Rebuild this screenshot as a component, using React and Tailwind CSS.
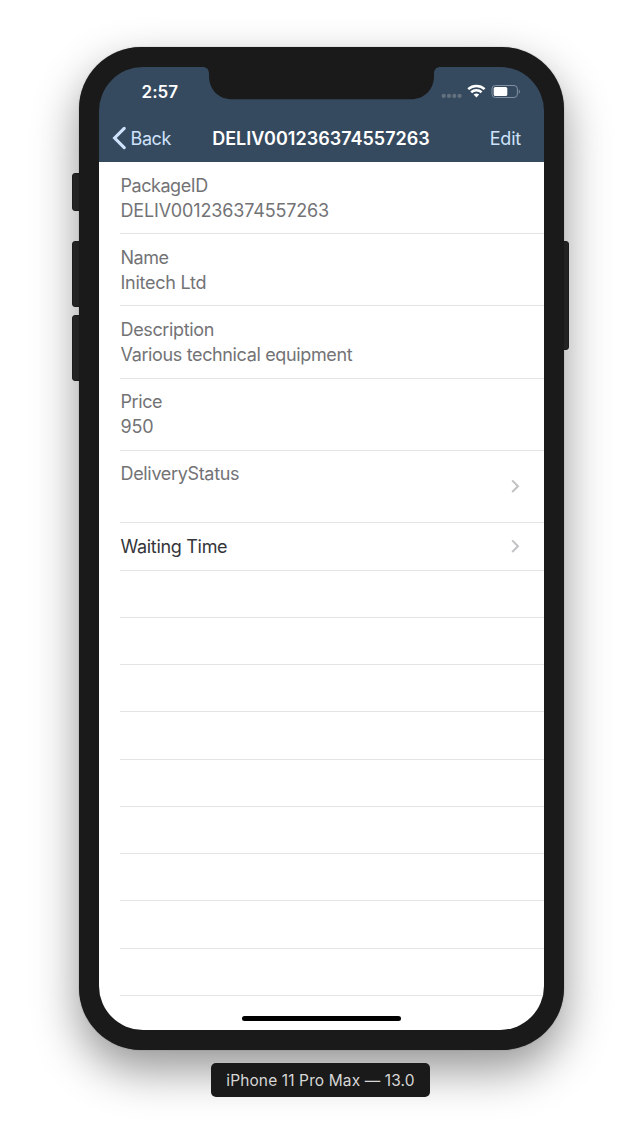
const fields = [
  { label: 'PackageID', value: 'DELIV001236374557263', labelCls: 'tracking-[-0.45px]', valueCls: 'tracking-[-0.15px]' },
  { label: 'Name', value: 'Initech Ltd', labelCls: 'tracking-[-0.45px]', valueCls: 'tracking-[-0.25px]' },
  { label: 'Description', value: 'Various technical equipment', labelCls: 'tracking-[-0.35px]', valueCls: 'tracking-[-0.36px]' },
  { label: 'Price', value: '950', labelCls: 'tracking-[-0.4px]', valueCls: 'tracking-[-0.2px]' },
  { label: 'DeliveryStatus', value: '', labelCls: 'tracking-[-0.33px]', valueCls: '', chevron: true },
];

const emptyRows = Array.from({ length: 9 }, (_, i) => i);

function Chevron() {
  return (
    <svg className="mr-[23.5px] h-[14px] w-[9px] shrink-0" viewBox="0 0 9 14" fill="none">
      <path d="M1.2 1.4 7 7.2 1.2 13" stroke="#c2c2c4" strokeWidth="2" />
    </svg>
  );
}

function StatusBar() {
  return (
    <div className="flex h-[47px] justify-between">
      <div className="ml-[43px] mt-[13px] text-[17px] font-semibold leading-6 tracking-[0.05px] text-white">2:57</div>
      <div className="mr-[23px] mt-[17px] flex h-[15px] items-start">
        <svg className="h-[15px] w-[80px]" viewBox="0 0 80 15" fill="none">
          <g fill="#63717f">
            <circle cx="2.7" cy="11.9" r="2.1" />
            <circle cx="8" cy="11.9" r="2.1" />
            <circle cx="13.3" cy="11.9" r="2.1" />
            <circle cx="18.6" cy="11.9" r="2.1" />
          </g>
          <g stroke="#fff" strokeWidth="2.5">
            <path d="M27.2 5.1a12.2 12.2 0 0 1 16.4 0" />
            <path d="M30.2 8.2a7.8 7.8 0 0 1 10.4 0" />
          </g>
          <path d="M32.6 10.6a4.4 4.4 0 0 1 5.6 0L35.4 13.4z" fill="#fff" />
          <rect x="51" y="1.5" width="25.4" height="12" rx="3.4" stroke="#8190a0" />
          <rect x="52.7" y="3" width="13.6" height="9" rx="1.6" fill="#fff" />
          <path d="M77.8 5.4c1.4.7 1.4 3.6 0 4.3z" fill="#8593a1" />
        </svg>
      </div>
    </div>
  );
}

function NavBar() {
  return (
    <div className="grid h-[48px] grid-cols-[1fr_auto_1fr] items-center text-[18px] leading-6">
      <div className="flex items-center text-[#cfe2fb]">
        <svg className="ml-[13px] h-[24px] w-[14px]" viewBox="0 0 14 24" fill="none">
          <path d="M12.2 2.3 2.6 12 12.2 21.7" stroke="#cfe2fb" strokeWidth="3.1" strokeLinecap="round" />
        </svg>
        <span className="ml-[5px] mt-px tracking-[-0.4px]">Back</span>
      </div>
      <h1 className="mt-px font-semibold tracking-[0.02px] text-white">DELIV001236374557263</h1>
      <div className="mr-[22.5px] mt-px text-right tracking-[-0.2px] text-[#cfe2fb]">Edit</div>
    </div>
  );
}

function SideButton({ className }) {
  return <div className={'absolute w-[12px] rounded-[3px] border border-[#222] bg-[#2c2c2c] ' + className} />;
}

export default function App() {
  return (
    <div className="flex h-[1140px] w-[642px] flex-col items-center overflow-hidden bg-white pt-[46.5px] font-['Inter',sans-serif]">
      <div className="relative h-[1003px] w-[485px] shrink-0">
        <SideButton className="-left-[7px] top-[126.5px] h-[38px]" />
        <SideButton className="-left-[7px] top-[194px] h-[66px]" />
        <SideButton className="-left-[7px] top-[268.5px] h-[66px]" />
        <SideButton className="-right-[5.5px] top-[194px] h-[109.5px]" />
        <div className="relative h-full w-full rounded-[62px] bg-[#1a1a1a] p-[20px] pt-[20.5px] shadow-[0_0_1px_rgba(0,0,0,0.5),0_20px_46px_rgba(0,0,0,0.42)]">
          <div className="relative h-full w-full overflow-hidden rounded-[44px]">
            <header className="h-[95px] bg-[#364a5f]">
              <StatusBar />
              <NavBar />
            </header>
            <svg className="absolute left-[103px] top-0 h-[33px] w-[239px]" viewBox="0 0 239 33" fill="#1a1a1a">
              <path d="M0-1V0C5 0 7 2.5 7 7V9C7 23 17 32.3 30 32.3H209C222 32.3 232 23 232 9V7C232 2.5 234 0 239 0V-1Z" />
            </svg>
            <main className="h-[868px] bg-white text-[18px] text-[#737376]">
              {fields.map((f) => (
                <div key={f.label} className="ml-[21.5px] flex h-[72.2px] items-center justify-between border-b border-[#e4e4e5]">
                  <div className="h-[50px] pl-[0.5px] leading-[25px]">
                    <div className={f.labelCls}>{f.label}</div>
                    <div className={f.valueCls}>{f.value}</div>
                  </div>
                  {f.chevron && <Chevron />}
                </div>
              ))}
              <div className="ml-[21.5px] flex h-[47.6px] items-center justify-between border-b border-[#e4e4e5] text-[#333539]">
                <span className="mt-[1.5px] pl-[0.5px] tracking-[-0.31px]">Waiting Time</span>
                <Chevron />
              </div>
              {emptyRows.map((i) => (
                <div key={i} className="ml-[21.5px] h-[47.25px] border-b border-[#e4e4e5]" />
              ))}
            </main>
            <div className="absolute bottom-[8.5px] left-[143px] h-[5.5px] w-[159px] rounded-full bg-black" />
          </div>
        </div>
      </div>
      <div className="relative mr-px mt-[13.5px] flex h-[34px] w-[219px] shrink-0 items-center justify-center rounded-[5px] bg-[#1a1a1a] text-[15.5px] tracking-[0.12px] text-[#d6d6d6]">
        <span className="mt-px whitespace-nowrap">iPhone 11 Pro Max — 13.0</span>
      </div>
    </div>
  );
}
